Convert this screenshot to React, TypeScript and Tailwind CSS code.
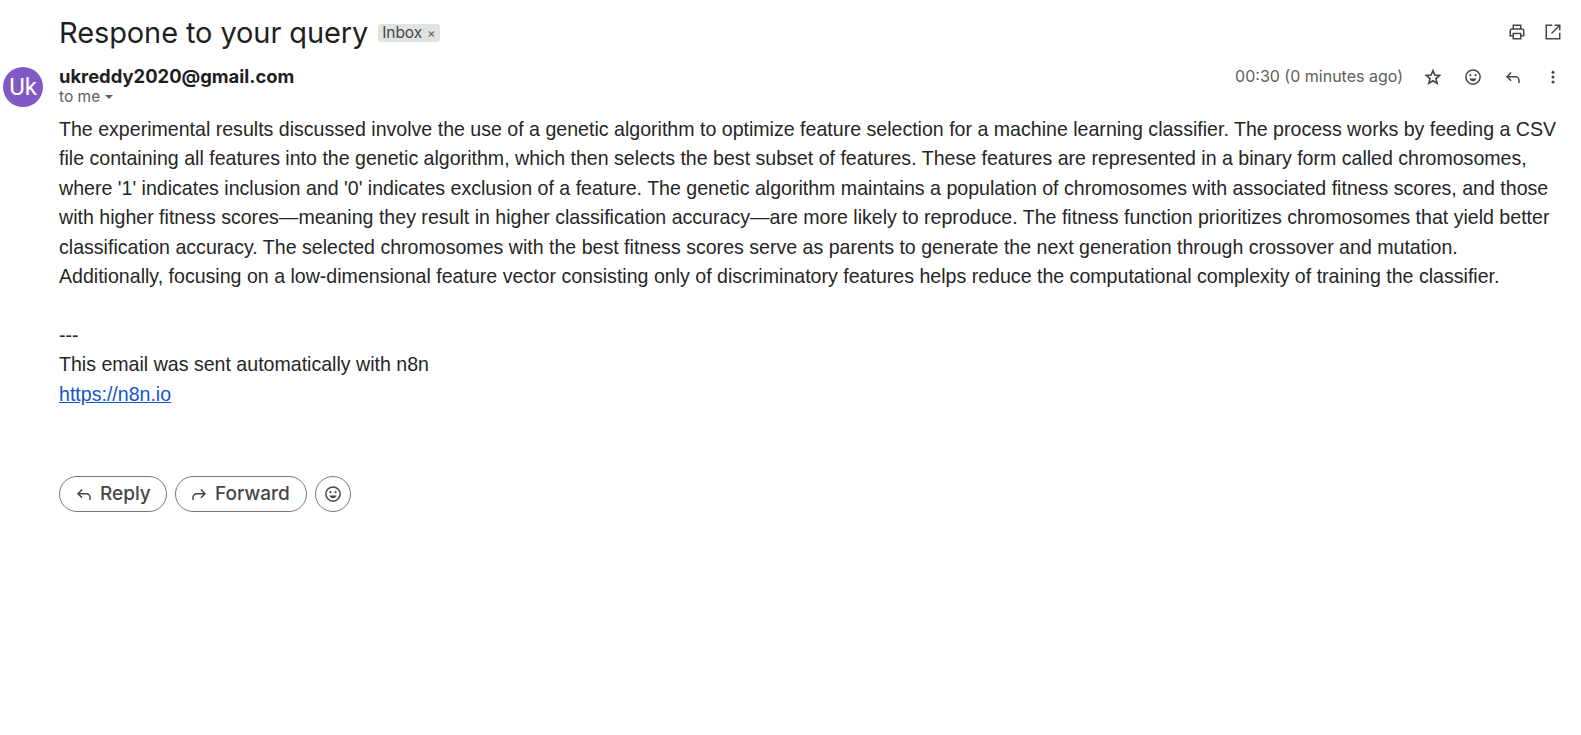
import React from "react";

const G = "[font-family:'Inter','Noto_Sans',sans-serif]";

function Smile({ size = 20 }: { size?: number }) {
  return (
    <svg width={size} height={size} viewBox="0 0 24 24" fill="none" stroke="#444746" strokeWidth="2">
      <circle cx="12" cy="12" r="9.5" />
      <circle cx="8.5" cy="9.5" r="1.4" fill="#444746" stroke="none" />
      <circle cx="15.5" cy="9.5" r="1.4" fill="#444746" stroke="none" />
      <path d="M7.2 14h9.6c-.7 2.2-2.6 3.6-4.8 3.6S7.9 16.2 7.2 14z" fill="#444746" stroke="none" />
    </svg>
  );
}

function ReplyArrow({ size = 18 }: { size?: number }) {
  return (
    <svg width={size} height={size} viewBox="0 0 24 24" fill="none" stroke="#444746" strokeWidth="2">
      <path d="M9.5 6 4 11.5 9.5 17" />
      <path d="M4 11.5h11a5 5 0 0 1 5 5V20" />
    </svg>
  );
}

function ForwardArrow({ size = 18 }: { size?: number }) {
  return (
    <svg width={size} height={size} viewBox="0 0 24 24" fill="none" stroke="#444746" strokeWidth="2">
      <path d="M14.5 6 20 11.5 14.5 17" />
      <path d="M20 11.5H9a5 5 0 0 0-5 5V20" />
    </svg>
  );
}

function Printer() {
  return (
    <svg width="18" height="18" viewBox="0 0 24 24" fill="none" stroke="#444746" strokeWidth="2">
      <path d="M7 8V3h10v5" />
      <path d="M7 17H3v-6.5A2.5 2.5 0 0 1 5.500 8h13a2.500 2.500 0 0 1 2.500 2.500V17h-4" />
      <path d="M7 14h10v7H7z" />
    </svg>
  );
}

function Popout() {
  return (
    <svg width="18" height="18" viewBox="0 0 24 24" fill="none" stroke="#444746" strokeWidth="2">
      <path d="M11 3H3v18h18v-8" />
      <path d="M14 3h7v7" />
      <path d="M21 3 10 14" />
    </svg>
  );
}

function Star() {
  return (
    <svg width="18" height="18" viewBox="0 0 24 24" fill="none" stroke="#444746" strokeWidth="2.200">
      <path d="m12 3.500 2.500 5.900 6.400.5-4.900 4.200 1.500 6.300L12 17.100l-5.500 3.300L8 14.100 3.100 9.900l6.400-.5z" />
    </svg>
  );
}

function Dots() {
  return (
    <svg width="18" height="18" viewBox="0 0 24 24" fill="#444746">
      <circle cx="12" cy="5.500" r="2" />
      <circle cx="12" cy="12" r="2" />
      <circle cx="12" cy="18.500" r="2" />
    </svg>
  );
}

export default function App() {
  return (
    <div className="min-h-[735px] bg-white pr-[19px] text-[#1f1f1f]">
      <div className="flex h-[67px] items-start justify-between pl-[59px]">
        <div className="flex items-center gap-[10px] pt-[14px]">
          <h1 className={`${G} text-[29px] leading-[38px] font-normal tracking-[-0.1px] text-[#1f1f1f]`}>Respone to your query</h1>
          <span className={`${G} flex h-[18px] items-center gap-[5px] rounded-[3px] bg-[#e0e3e1] px-[4px] text-[15.500px] tracking-[-0.1px] text-[#444746]`}>
            Inbox <span className="text-[13px] leading-none text-[#5e5e5e]">×</span>
          </span>
        </div>
        <div className="flex items-center gap-[18px] pt-[23px]">
          <Printer />
          <Popout />
        </div>
      </div>

      <div className="flex">
        <div className="ml-[3px] flex h-[40px] w-[40px] shrink-0 items-center justify-center rounded-full bg-[#8159c4] font-['Roboto',sans-serif] text-[24px] text-white">
          Uk
        </div>
        <div className="ml-[16px] min-w-0 flex-1">
          <div className="flex h-[48px] items-start justify-between">
            <div className="-mt-[1px]">
              <div className={`${G} text-[18.400px] leading-[20px] font-bold text-[#1f1f1f]`}>ukreddy2020@gmail.com</div>
              <div className={`${G} flex items-center gap-[5px] text-[15.500px] leading-[21px] text-[#5e5e5e]`}>
                to me
                <span className="mt-[1px] h-0 w-0 border-x-[4px] border-t-[4px] border-x-transparent border-t-[#5e5e5e]" />
              </div>
            </div>
            <div className="flex items-center">
              <span className={`${G} mr-[21px] -mt-[1px] text-[16px] leading-[20px] text-[#5e5e5e]`}>00:30 (0 minutes ago)</span>
              <div className="flex items-center gap-[22px]">
                <Star />
                <Smile size={18} />
                <ReplyArrow />
                <Dots />
              </div>
            </div>
          </div>

          <div className="max-w-[1500px] font-['Liberation_Sans',Arial,sans-serif] text-[19.580px] leading-[29.400px] text-[#262626]">
            <p>
              The experimental results discussed involve the use of a genetic algorithm to optimize feature selection for a machine learning classifier. The process works by feeding a CSV file containing all features into the genetic algorithm, which then selects the best subset of features. These features are represented in a binary form called chromosomes, where '1' indicates inclusion and '0' indicates exclusion of a feature. The genetic algorithm maintains a population of chromosomes with associated fitness scores, and those with higher fitness scores—meaning they result in higher classification accuracy—are more likely to reproduce. The fitness function prioritizes chromosomes that yield better classification accuracy. The selected chromosomes with the best fitness scores serve as parents to generate the next generation through crossover and mutation. Additionally, focusing on a low-dimensional feature vector consisting only of discriminatory features helps reduce the computational complexity of training the classifier.
            </p>
            <p className="mt-[29.400px]">---</p>
            <p>This email was sent automatically with n8n</p>
            <a className="text-[#1155cc] underline" href="#">https://n8n.io</a>
          </div>

          <div className={`${G} mt-[67px] flex items-center gap-[8px] text-[19px] font-medium text-[#444746]`}>
            <button className="flex h-[36px] w-[108px] items-center gap-[7px] rounded-full border border-[#747775] pl-[15px]">
              <ReplyArrow /> Reply
            </button>
            <button className="flex h-[36px] w-[132px] items-center gap-[7px] rounded-full border border-[#747775] pl-[14px]">
              <ForwardArrow /> Forward
            </button>
            <button className="flex h-[36px] w-[36px] items-center justify-center rounded-full border border-[#747775]">
              <Smile size={18} />
            </button>
          </div>
        </div>
      </div>
    </div>
  );
}
